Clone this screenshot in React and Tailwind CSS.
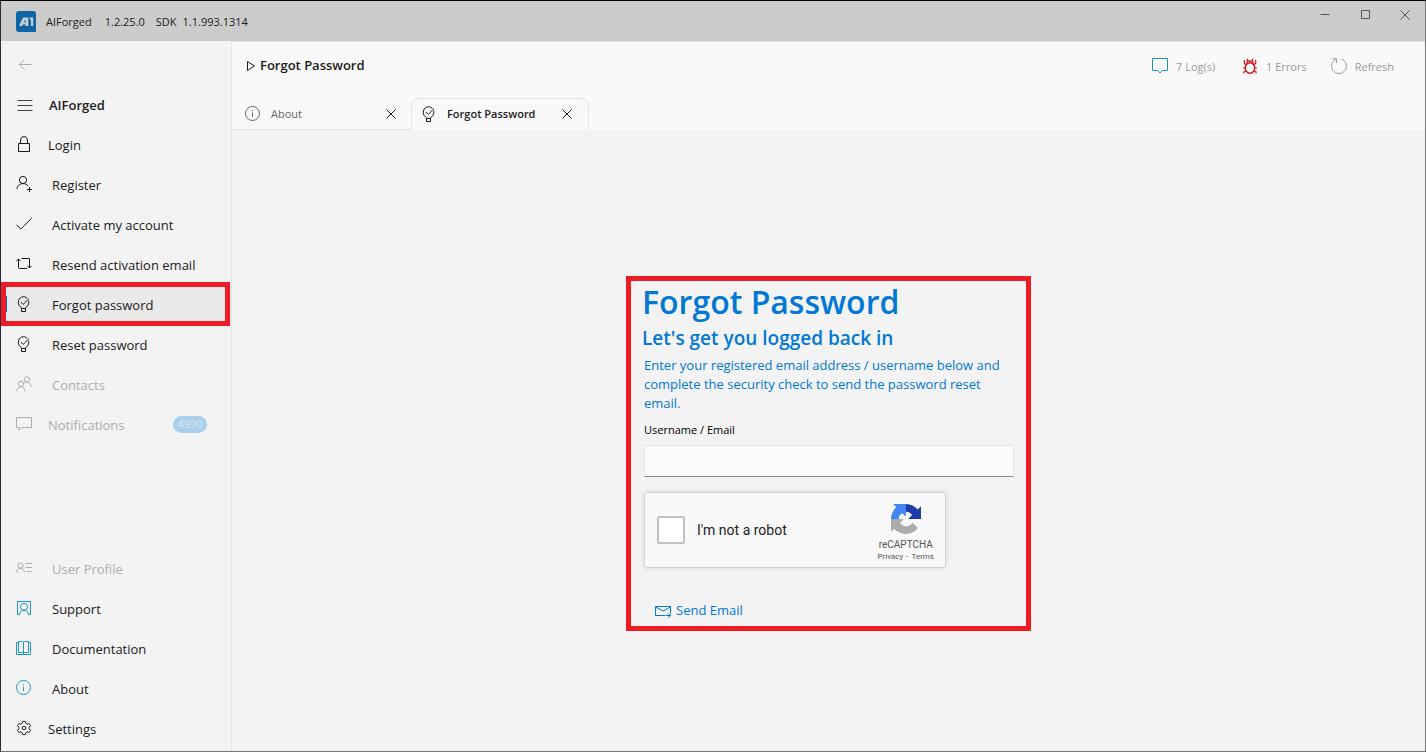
import React from "react";

function Icon({ size = 16, className = "", children }) {
  return (
    <svg
      width={size}
      height={size}
      viewBox="0 0 16 16"
      fill="none"
      stroke="currentColor"
      strokeWidth="1"
      className={`shrink-0 ${className}`}
      aria-hidden="true"
    >
      {children}
    </svg>
  );
}

const LockIcon = () => (
  <Icon>
    <path d="M2.5 7.5h11v8h-11zM4.5 7.5V4a3.5 3.5 0 0 1 7 0v3.500" />
  </Icon>
);

const RegisterIcon = () => (
  <Icon>
    <circle cx="7" cy="4" r="3.600" />
    <path d="M1 13c0-3.200 2.600-5.400 6-5.400 2.200 0 3.800.9 4.800 2.400M13.500 11v5M11 13.500h5" />
  </Icon>
);

const CheckIcon = () => (
  <Icon>
    <path d="M.5 8.700l4.300 4.300L15.700 2.200" />
  </Icon>
);

const ResendIcon = () => (
  <Icon>
    <path d="M11 12.500H3.500a1 1 0 0 1-1-1V3M.3 5.200 2.500 3l2.200 2.200M5.500 2.500h8v9.500M11.300 9.800l2.200 2.200 2.200-2.200" />
  </Icon>
);

const BulbIcon = () => (
  <Icon>
    <path d="M5.500 12.500V11.700C3.500 10.600 2.300 8.600 2.300 6.200A5.300 5.300 0 0 1 11.300 2.200M12.700 4.700C13.300 7.600 12 10.400 9.500 11.700V15.500H5.500V12.500H9.500M4.800 6 7.200 8.400 13 2.600" />
  </Icon>
);

const ContactsIcon = () => (
  <Icon>
    <circle cx="11" cy="3.500" r="2.800" />
    <circle cx="5" cy="8" r="2.700" />
    <path d="M1 15.500c0-2.800 1.700-4.800 4-4.800s4 2 4 4.800M8.500 7c.7-.5 1.500-.7 2.500-.7 2.400 0 4 1.800 4.200 4.500" />
  </Icon>
);

const MessageIcon = () => (
  <Icon>
    <path d="M.5 1.500h15v10h-10l-2.500 2.800v-2.800H.5z" />
  </Icon>
);

const ProfileIcon = () => (
  <Icon>
    <circle cx="4.500" cy="5.500" r="2.700" />
    <path d="M.5 12.500c.2-2.600 1.700-4.300 4-4.300s3.800 1.700 4 4.300M9 3.500h7M9.500 7.500H16M10.500 11.500H16" />
  </Icon>
);

const SupportIcon = () => (
  <Icon className="text-[#1a97c6]">
    <path d="M3.500 14.500h-2v-13h13v13h-2" />
    <circle cx="8" cy="6.800" r="3.500" />
    <path d="M3.500 15c0-2.800 1.900-4.700 4.500-4.700s4.500 1.900 4.500 4.700" />
  </Icon>
);

const BookIcon = () => (
  <Icon className="text-[#1a97c6]">
    <path d="M2.500 2.500h-2v12h14v-12h-2M2.500 12.500v-11h4.200l.8.800.8-.8h4.200v11h-4.200l-.8.800-.8-.8zM7.500 2v12.500" />
  </Icon>
);

const InfoIcon = ({ className = "" }) => (
  <Icon className={className}>
    <circle cx="7.500" cy="7.500" r="7" />
    <path d="M7.500 6.500v4.500M7.500 4v1.200" />
  </Icon>
);

const GearIcon = () => (
  <Icon>
    <path d="M6.700 1.500Q8 .9 9.300 1.500L9.800 3.300 11.200 4.100 13 3.600Q14.200 4.400 14.500 5.800L13.200 7.200V8.800L14.500 10.200Q14.200 11.600 13 12.400L11.200 11.900 9.800 12.700 9.300 14.500Q8 15.100 6.700 14.500L6.200 12.700 4.800 11.900 3 12.400Q1.800 11.600 1.500 10.200L2.800 8.800V7.200L1.500 5.800Q1.800 4.400 3 3.600L4.800 4.100 6.200 3.300Z" />
    <circle cx="8" cy="8" r="1.700" />
  </Icon>
);

const CloseIcon = () => (
  <Icon>
    <path d="M3.500 3.500l9 9M12.500 3.500l-9 9" />
  </Icon>
);

const LogIcon = () => (
  <Icon className="text-[#1a97c6]">
    <path d="M.5.500h15v12h-5L8 15l-2.500-2.500h-5z" />
  </Icon>
);

const BugIcon = () => (
  <Icon className="text-[#cc1111]">
    <ellipse cx="8" cy="10" rx="4.700" ry="5.300" strokeWidth="1.400" />
    <path
      strokeWidth="1.200"
      d="M4.500 5.500 5.500 3.200h5l1 2.300M6.300 3 5 .8M9.700 3 11 .8M4 6.800 2.300 5.300V2M12 6.800l1.700-1.500V2M3.200 10H1M12.800 10H15M3.800 12.800 2 13.800v1.800M12.200 12.800l1.800 1v1.800"
    />
  </Icon>
);

const RefreshIcon = () => (
  <Icon>
    <path d="M10.500 1.100A7.400 7.400 0 1 1 5.500 1.100M1.500.8H5.500V5" />
  </Icon>
);

const MailIcon = () => (
  <Icon>
    <path d="M10 12.500H.5v-9h15v7M.5 4l7.500 4L15.500 4M10.500 12.500h5M13.300 10.300l2.200 2.200-2.200 2.200" />
  </Icon>
);

const LogoIcon = () => (
  <svg width="20" height="21" viewBox="0 0 20 21" className="shrink-0" aria-hidden="true">
    <path d="M3 0h14a3 3 0 0 1 3 3v18H3a3 3 0 0 1-3-3V3a3 3 0 0 1 3-3z" fill="#0f66a5" />
    <path
      fillRule="evenodd"
      d="M3 15 7 6.500h5.300V15H9.600v-1.500H6.800L6.100 15zM7.800 11.500h1.800V8.300zM13.200 6.500h4V15H15V9.500z"
      fill="#c5ced4"
    />
  </svg>
);

const CaptchaLogo = () => (
  <svg width="30" height="30" viewBox="0 0 64 64" aria-hidden="true">
    <path fill="#1c3aa9" d="M64 31.955l-.033-1.370V4.687l-7.160 7.160C50.948 4.674 42.033.093 32.050.093c-10.400 0-19.622 4.960-25.458 12.640l11.736 11.860a15.550 15.550 0 0 1 4.754-5.334c2.050-1.600 4.952-2.906 8.968-2.906.485 0 .860.057 1.135.163 4.976.393 9.288 3.140 11.828 7.124l-8.307 8.307L64 31.953" />
    <path fill="#4285f4" d="M31.862.094l-1.370.033H4.594l7.160 7.160C4.580 13.147 0 22.060 0 32.046c0 10.400 4.960 19.622 12.640 25.458L24.500 45.768a15.550 15.550 0 0 1-5.334-4.754c-1.600-2.050-2.906-4.952-2.906-8.968 0-.485.057-.860.163-1.135.393-4.976 3.140-9.288 7.124-11.828l8.307 8.307L31.860.095" />
    <path fill="#ababab" d="M.001 32.045l.033 1.370v25.898l7.160-7.160c5.860 7.173 14.774 11.754 24.760 11.754 10.400 0 19.622-4.960 25.458-12.640l-11.736-11.860a15.550 15.550 0 0 1-4.754 5.334c-2.050 1.600-4.952 2.906-8.968 2.906-.485 0-.860-.057-1.135-.163-4.976-.393-9.288-3.140-11.828-7.124l8.307-8.307c-10.522.040-22.400.066-27.295-.005" />
  </svg>
);

const mainItems = [
  { label: "Login", icon: <LockIcon />, wide: true },
  { label: "Register", icon: <RegisterIcon /> },
  { label: "Activate my account", icon: <CheckIcon /> },
  { label: "Resend activation email", icon: <ResendIcon /> },
  { label: "Forgot password", icon: <BulbIcon />, selected: true },
  { label: "Reset password", icon: <BulbIcon /> },
  { label: "Contacts", icon: <ContactsIcon />, disabled: true },
  { label: "Notifications", icon: <MessageIcon />, disabled: true, wide: true, badge: "4990" },
];

const footerItems = [
  { label: "User Profile", icon: <ProfileIcon />, disabled: true },
  { label: "Support", icon: <SupportIcon /> },
  { label: "Documentation", icon: <BookIcon /> },
  { label: "About", icon: <InfoIcon className="text-[#1a97c6]" /> },
  { label: "Settings", icon: <GearIcon />, wide: true },
];

function NavItem({ label, icon, wide, selected, disabled, badge }) {
  return (
    <li className="relative">
      <button
        type="button"
        disabled={disabled}
        aria-current={selected ? "page" : undefined}
        className={`flex h-10 w-full items-center pb-[2px] pl-[15px] text-left text-[13px] leading-5 ${
          wide ? "gap-4" : "gap-5"
        } ${disabled ? "text-[#adadad]" : "text-[#1b1b1b]"} ${selected ? "bg-[#e9e9e9]" : ""}`}
      >
        {icon}
        <span className="flex-1 pt-[2px]">{label}</span>
        {badge && (
          <span className="mr-6 flex h-[17px] w-[34px] items-center justify-center rounded-full bg-[#a9cfec] text-[11px] text-[#d3e6f4]">
            {badge}
          </span>
        )}
      </button>
      {selected && (
        <span className="pointer-events-none absolute -top-[3px] -bottom-px left-0 right-px border-[5px] border-[#ed1c24]">
          <span className="absolute top-1/2 left-0 h-4 w-px -translate-y-1/2 bg-[#0067b8]" />
        </span>
      )}
    </li>
  );
}

export default function App() {
  return (
    <div className="flex min-h-screen flex-col border border-t-black border-r-[#777777] border-b-[#777375] border-l-[#2d2c3a] bg-[#f3f3f3] font-['Open_Sans','Noto_Sans',sans-serif] text-[#1b1b1b]">
      <header className="flex h-10 items-center bg-[#cccccc] pl-[15px] text-[11px]">
        <LogoIcon />
        <div className="flex pt-[2px] pl-[10px]">
          <span>AIForged</span>
          <span className="ml-[13px]">1.2.25.0</span>
          <span className="ml-[11px]">SDK</span>
          <span className="ml-[6px]">1.1.993.1314</span>
        </div>
        <div className="ml-auto flex self-start text-[#555555]">
          <button type="button" aria-label="Minimize" className="flex h-7 w-10 items-center justify-center">
            <Icon><path d="M3.500 7.500h9" /></Icon>
          </button>
          <button type="button" aria-label="Maximize" className="flex h-7 w-10 items-center justify-center">
            <Icon><path d="M4.500 3.500h8v8h-8z" /></Icon>
          </button>
          <button type="button" aria-label="Close" className="flex h-7 w-10 items-center justify-center">
            <CloseIcon />
          </button>
        </div>
      </header>

      <div className="flex flex-1">
        <nav className="flex w-[231px] shrink-0 flex-col border-r border-[#e5e5e5] pt-1 pb-[2px]">
          <button type="button" aria-label="Back" disabled className="flex h-10 items-center pl-4 text-[#adadad]">
            <Icon><path d="M2.500 7.500h12M7.500 2.500l-5 5 5 5" /></Icon>
          </button>
          <button type="button" className="flex h-10 items-center gap-4 pl-4 text-[13px] leading-5 font-semibold">
            <Icon className="text-[#444444]"><path d="M.5 3.500h15M.5 8.500h15M.5 13.500h15" /></Icon>
            <span>AIForged</span>
          </button>
          <ul>
            {mainItems.map((item) => (
              <NavItem key={item.label} {...item} />
            ))}
          </ul>
          <ul className="mt-auto">
            {footerItems.map((item) => (
              <NavItem key={item.label} {...item} />
            ))}
          </ul>
        </nav>

        <div className="flex min-w-0 flex-1 flex-col">
          <div className="bg-[#f9f9f9]">
            <div className="flex h-[57px] items-center justify-between border-t border-[#e5e5e5] pr-[31px] pb-2 pl-[13px]">
              <h1 className="flex items-center gap-[3px] text-[13px] font-semibold">
                <svg width="12" height="12" viewBox="0 0 12 12" fill="none" stroke="currentColor" aria-hidden="true">
                  <path d="M2.500 1.500v9L9.500 6z" />
                </svg>
                Forgot Password
              </h1>
              <div className="flex gap-6 text-[11px] text-[#999999]">
                <button type="button" className="flex min-w-[66px] items-center gap-2">
                  <LogIcon />
                  <span className="pt-[2px]">7 Log(s)</span>
                </button>
                <button type="button" className="flex items-center gap-2">
                  <BugIcon />
                  <span className="pt-[2px]">1 Errors</span>
                </button>
                <button type="button" className="flex items-center gap-2">
                  <RefreshIcon />
                  <span className="pt-[2px]">Refresh</span>
                </button>
              </div>
            </div>
            <div className="flex h-8 text-[11px]">
              <div className="flex w-[179px] items-center border-b border-[#e5e5e5] pr-3 pl-[13px] text-[#666666]">
                <InfoIcon />
                <button type="button" className="ml-[10px] flex-1 pt-[2px] text-left">About</button>
                <button type="button" aria-label="Close About" className="text-[#1b1b1b]"><CloseIcon /></button>
              </div>
              <div className="flex w-[178px] items-center rounded-t-lg border border-b-0 border-[#e5e5e5] pr-[13px] pb-[2px] pl-[9px]">
                <BulbIcon />
                <button type="button" className="ml-[10px] flex-1 pt-[2px] text-left font-semibold">
                  Forgot Password
                </button>
                <button type="button" aria-label="Close Forgot Password"><CloseIcon /></button>
              </div>
            </div>
          </div>

          <main className="flex flex-1 items-center justify-center pt-[26px]">
            <form
              className="w-[405px] border-[5px] border-[#ed1c24] pr-3 pb-[3px] pl-[13px]"
              onSubmit={(event) => event.preventDefault()}
            >
              <div className="-ml-[2px] font-semibold text-[#0078d4]">
                <h2 className="pt-px text-[32px] leading-[40px]">Forgot Password</h2>
                <p className="pt-1 text-[19px] leading-[24px]">Let&apos;s get you logged back in</p>
              </div>
              <p className="pt-[6px] text-[13px] leading-[19px] text-[#0078d4]">
                Enter your registered email address / username below and complete the security check to send the password
                reset email.
              </p>
              <label htmlFor="username" className="mt-[9px] block text-[11px] leading-[16px] text-black">
                Username / Email
              </label>
              <input
                id="username"
                type="text"
                className="mt-[7px] block h-8 w-full border border-[#e5e5e5] border-b-[#868686] bg-[#fbfbfb] px-2 text-[13px] outline-none"
              />
              <div className="mt-[15px] flex h-[76px] w-[302px] items-center rounded-[3px] border border-[#d3d3d3] bg-[#f9f9f9] pr-[11px] pl-3 font-[Roboto,sans-serif] shadow-[0_0_4px_1px_rgba(0,0,0,0.08)]">
                <input
                  id="robot"
                  type="checkbox"
                  className="h-7 w-7 appearance-none rounded-[2px] border-2 border-[#c1c1c1] bg-white"
                />
                <label htmlFor="robot" className="ml-3 flex-1 text-[14px] text-[#222222]">
                  I&apos;m not a robot
                </label>
                <div className="flex flex-col items-center pt-[6px] text-[#555555]">
                  <CaptchaLogo />
                  <span className="mt-1 text-[10px] leading-[13px]">reCAPTCHA</span>
                  <span className="flex gap-[3px] text-[8px] leading-[12px]">
                    <a href="#privacy">Privacy</a>
                    <span>-</span>
                    <a href="#terms">Terms</a>
                  </span>
                </div>
              </div>
              <button
                type="submit"
                className="mt-[31px] ml-[11px] flex h-6 items-center gap-[5px] text-[13px] text-[#0078d4]"
              >
                <MailIcon />
                Send Email
              </button>
            </form>
          </main>
        </div>
      </div>
    </div>
  );
}
